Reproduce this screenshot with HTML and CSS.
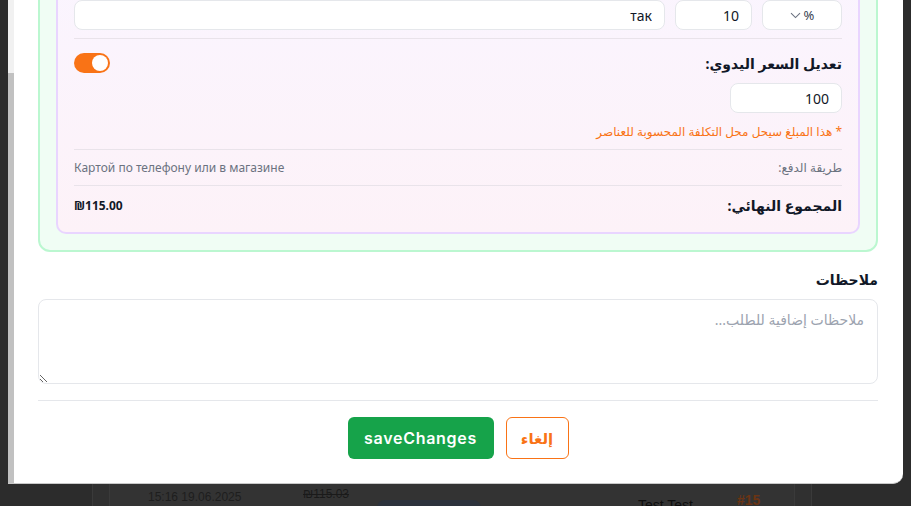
FILE: index.html
```html
<!DOCTYPE html>
<html lang="ar">
<head>
<meta charset="utf-8">
<title>Order edit</title>
<link rel="stylesheet" href="styles.css">
</head>
<body>
<div class="page">
  <div class="bg-frame">
    <div class="bg-table">
      <div class="bg-row">
        <div class="cell cell-date">15:16 19.06.2025</div>
        <div class="cell cell-price"><s>₪115.03</s></div>
        <div class="cell cell-badge"><span class="badge"></span></div>
        <div class="cell cell-name">Test Test</div>
        <div class="cell cell-id">#15</div>
      </div>
    </div>
  </div>
</div>

<div class="modal">
  <div class="scrollbar"><div class="thumb"></div></div>
  <div class="modal-body" dir="rtl">
    <div class="pricing">
      <div class="pricing-inner">
        <div class="sec sec-discount">
          <div class="sec-label">الخصم:</div>
          <div class="input-row">
            <div class="field field-select">
              <span>%</span>
              <svg class="chev" width="11" height="7" viewBox="0 0 11 7"><path d="M1 1.2 L5.5 5.6 L10 1.2" fill="none" stroke="#6b7280" stroke-width="1.1"/></svg>
            </div>
            <input class="field field-num" type="text" value="10">
            <input class="field field-text" type="text" value="так">
          </div>
        </div>
        <div class="sec sec-manual">
          <div class="sec-head">
            <span class="head-label">تعديل السعر اليدوي:</span>
            <span class="toggle"><span class="knob"></span></span>
          </div>
          <input class="field field-manual" type="text" value="100">
          <div class="note">* هذا المبلغ سيحل محل التكلفة المحسوبة للعناصر</div>
        </div>
        <div class="sec sec-pay">
          <span>طريقة الدفع:</span>
          <span dir="ltr">Картой по телефону или в магазине</span>
        </div>
        <div class="sec sec-total">
          <span class="total-label">المجموع النهائي:</span>
          <span class="total-value" dir="ltr">₪115.00</span>
        </div>
      </div>
    </div>

    <div class="notes">
      <div class="notes-label">ملاحظات</div>
      <textarea placeholder="ملاحظات إضافية للطلب..."></textarea>
    </div>

    <div class="footer">
      <button class="btn btn-cancel">إلغاء</button>
      <button class="btn btn-save">saveChanges</button>
    </div>
  </div>
</div>
</body>
</html>
```
FILE: styles.css
```css
* { box-sizing: border-box; }
html, body { margin: 0; padding: 0; }
body {
  width: 911px;
  height: 506px;
  overflow: hidden;
  position: relative;
  background: #2c2c2c;
  font-family: "Noto Sans", "DejaVu Sans", sans-serif;
  color: #111827;
}

/* dimmed page behind the modal */
.page { height: 506px; padding-left: 92px; }
.bg-frame {
  width: 720px;
  height: 100%;
  background: #303030;
  border-left: 1px solid #3a3a3a;
  border-right: 1px solid #3a3a3a;
  padding: 0 16px;
}
.bg-table {
  height: 100%;
  background: #333333;
  border-left: 1px solid #3a3a3a;
  border-right: 1px solid #3a3a3a;
  padding-top: 484px;
}
.bg-row { display: flex; align-items: flex-start; height: 22px; }
.cell { flex: none; font-family: "Liberation Sans", sans-serif; }
.cell-date { width: 193px; padding: 6px 0 0 38px; font-size: 12px; color: #1e1e1e; }
.cell-price { width: 74px; padding-top: 3px; font-size: 12px; color: #1a1a1a; }
.cell-badge { width: 261px; padding-top: 16px; }
.badge { display: block; width: 104px; height: 20px; border-radius: 8px; background: #2c323c; }
.cell-name { width: 99px; padding-top: 13px; font-size: 14px; color: #0e0e0e; }
.cell-id { padding-top: 8px; font-size: 14px; font-weight: 700; color: #6b3414; }

/* modal */
.modal {
  position: absolute;
  left: 8px;
  top: 0;
  width: 895px;
  height: 484px;
  background: #ffffff;
  border-bottom: 1px solid #c9c9c9;
  border-bottom-right-radius: 10px;
  display: flex;
  overflow: hidden;
}
.scrollbar {
  flex: none;
  width: 6px;
  background: #f1f1f1;
  display: flex;
  flex-direction: column;
  justify-content: flex-end;
}
.thumb { height: 410px; background: #c1c1c1; }
.modal-body {
  flex: 1;
  min-width: 0;
  display: flex;
  flex-direction: column;
  justify-content: flex-end;
  overflow: hidden;
  padding: 0 25px 24px 24px;
}

.pricing {
  flex: none;
  border: 2px solid #bbf7d0;
  background: #f0fdf4;
  border-radius: 12px;
  padding: 16px;
}
.pricing-inner {
  border: 2px solid #e9d5ff;
  border-radius: 10px;
  background: linear-gradient(180deg, #faf5ff 0%, #fdf2f8 100%);
  padding: 16px;
}
.sec { border-top: 1px solid #e9e3ea; }
.sec-discount { border-top: 0; padding-bottom: 8px; }
.sec-label { font-size: 14px; font-weight: 700; line-height: 20px; }
.input-row { display: flex; gap: 10px; margin-top: 8px; }

.field {
  height: 30px;
  border: 1px solid #e5e7eb;
  border-radius: 8px;
  background: #ffffff;
  padding: 0 12px;
  font-family: "Noto Sans", "DejaVu Sans", sans-serif;
  font-size: 14px;
  color: #111827;
  outline: none;
}
.field-text { flex: 1; min-width: 0; }
.field-num { flex: none; width: 77px; }
.field-select {
  flex: none;
  width: 80px;
  display: flex;
  align-items: center;
  justify-content: center;
  gap: 3px;
  font-size: 13px;
  color: #374151;
}
.chev { display: block; }

.sec-manual { padding: 12px 0 8px; }
.sec-head {
  display: flex;
  justify-content: space-between;
  align-items: center;
  height: 24px;
}
.head-label { font-size: 14px; font-weight: 700; }
.toggle {
  direction: ltr;
  width: 36px;
  height: 20px;
  border-radius: 10px;
  background: #f97316;
  display: flex;
  justify-content: flex-end;
  align-items: center;
  padding: 0 2px;
}
.knob { width: 16px; height: 16px; border-radius: 50%; background: #ffffff; }
.field-manual { display: block; width: 112px; margin-top: 8px; }
.note { margin-top: 10px; font-size: 12px; line-height: 18px; color: #f97316; }

.sec-pay {
  display: flex;
  justify-content: space-between;
  align-items: center;
  padding: 9px 0 8px;
  font-size: 12px;
  line-height: 18px;
  color: #6b7280;
}
.sec-total {
  display: flex;
  justify-content: space-between;
  align-items: center;
  padding-top: 10px;
  line-height: 20px;
}
.total-label { font-size: 14px; font-weight: 700; }
.total-value { font-size: 12px; font-weight: 700; }

.notes { flex: none; margin-top: 18px; }
.notes-label { font-size: 14px; font-weight: 700; line-height: 20px; margin-bottom: 9px; }
.notes textarea {
  display: block;
  width: 100%;
  height: 85px;
  border: 1px solid #e5e7eb;
  border-radius: 8px;
  padding: 10px 13px;
  font-family: "Noto Sans", "DejaVu Sans", sans-serif;
  font-size: 14px;
  line-height: 20px;
  color: #111827;
  resize: vertical;
  outline: none;
}
.notes textarea::placeholder { color: #9ca3af; }

.footer {
  flex: none;
  margin-top: 16px;
  border-top: 1px solid #e5e7eb;
  padding-top: 16px;
  display: flex;
  justify-content: center;
  gap: 12px;
}
.btn {
  height: 42px;
  border-radius: 6px;
  font-size: 16px;
  font-weight: 600;
  cursor: pointer;
}
.btn-save {
  width: 146px;
  background: #16a34a;
  color: #ffffff;
  border: 0;
  font-family: Inter, "Noto Sans", sans-serif;
  letter-spacing: 0.7px;
}
.btn-cancel {
  width: 63px;
  background: #ffffff;
  color: #f97316;
  border: 1px solid #f97316;
  font-family: "Noto Sans", "DejaVu Sans", sans-serif;
  font-size: 15px;
}
```
